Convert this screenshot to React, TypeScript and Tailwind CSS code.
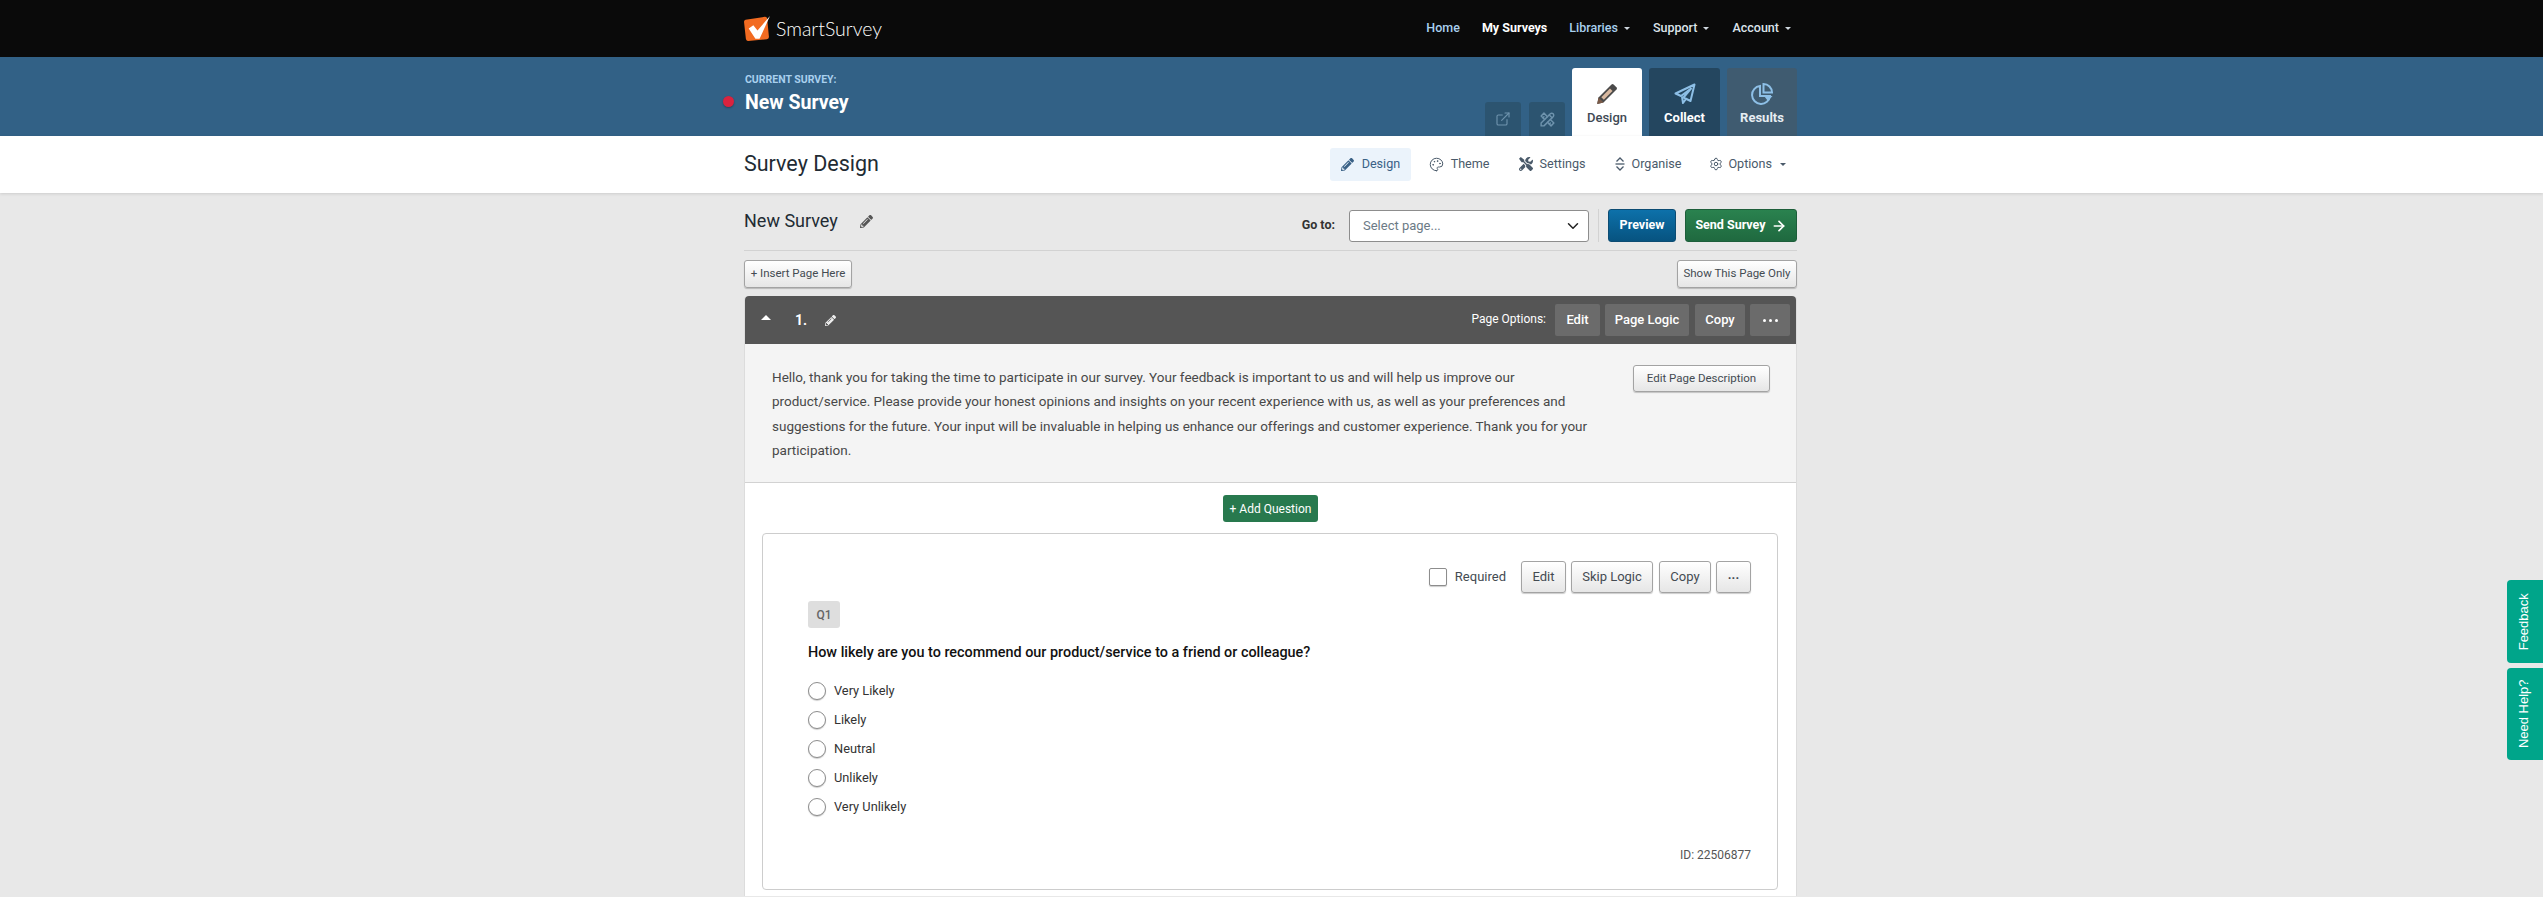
import React from "react";
import { ExternalLink, Palette, Settings, ChevronDown, ArrowRight } from "lucide-react";
import { FaPencilAlt, FaTools } from "react-icons/fa";
import { TbTools } from "react-icons/tb";

const font = { fontFamily: "Roboto, 'Liberation Sans', sans-serif" };

function Logo() {
  return (
    <svg width="27" height="26" viewBox="0 0 26 25">
      <path d="M1.5 3.5 L20 0.8 Q22 0.6 22.3 2.5 L24 20 Q24.2 22 22 22.3 L4 24 Q2 24.2 1.8 22 L0 5.5 Q0 3.8 1.5 3.5Z" fill="#f26b21" />
      <path d="M4.5 12 L9 9 L13 14 L25 0 L15 22 L11 22 Z" fill="#fff" />
    </svg>
  );
}

function PencilBig() {
  return (
    <svg width="22" height="22" viewBox="0 0 22 22">
      <path d="M15.5 1.5 Q16.5 0.6 17.6 1.4 L20.6 4.4 Q21.4 5.5 20.5 6.5 L7.5 19.5 L1.2 21 L2.5 14.5 Z" fill="#4a4a4a" />
      <path d="M5.3 14.2 L14 5.5 L16.5 8 L7.8 16.7 Z" fill="#d9b9a0" />
      <path d="M2.5 14.5 L1.2 21 L7.5 19.5 Z" fill="#7a5a48" />
    </svg>
  );
}

function Plane() {
  return (
    <svg width="22" height="22" viewBox="0 0 22 22" fill="none" stroke="#8dbfe6" strokeWidth="2" strokeLinejoin="round">
      <path d="M20.5 1.5 L1.5 10.5 L7 13 L17 5.5 L9.5 14.5 L16.5 18 Z" />
      <path d="M8 13.5 L9 20 L12 16" />
    </svg>
  );
}

function Pie() {
  return (
    <svg width="22" height="22" viewBox="0 0 22 22" fill="none" stroke="#8dbfe6" strokeWidth="2">
      <path d="M9 3 A9 9 0 1 0 19 13 H9 Z" />
      <path d="M12.5 1 A8.5 8.5 0 0 1 21 9.5 H12.5 Z" />
      <path d="M13 13 H21.5 L17 18 Z" fill="#8dbfe6" stroke="none" />
    </svg>
  );
}

function Caret({ className }: { className: string }) {
  return <span className={"inline-block w-0 h-0 border-x-[3px] border-x-transparent border-t-[3px] " + className} />;
}

function OrganiseIcon() {
  return (
    <svg width="10" height="14" viewBox="0 0 10 14" fill="none" stroke="#4a5a6a" strokeWidth="1.3">
      <path d="M1.5 4.5 L5 1 L8.5 4.5" />
      <path d="M0.5 7 H9.5" />
      <path d="M1.5 9.5 L5 13 L8.5 9.5" />
    </svg>
  );
}

function GreyButton({ children, className }: { children: React.ReactNode; className: string }) {
  return (
    <button className={"flex items-center justify-center rounded-[3px] border border-[#a3a3a3] bg-gradient-to-b from-white to-[#e6e6e6] text-[#444b52] shadow-[0_1px_1px_rgba(0,0,0,0.2)] " + className}>
      {children}
    </button>
  );
}

function DarkButton({ children, className }: { children: React.ReactNode; className: string }) {
  return <button className={"flex h-[32px] items-center justify-center rounded-[2px] bg-[#6b6b6b] text-[13px] font-medium text-white " + className}>{children}</button>;
}

function Option({ label }: { label: string }) {
  return (
    <div className="flex h-[29px] items-center gap-[8px]">
      <span className="h-[18px] w-[18px] rounded-full border border-[#8d8d8d] bg-white shadow-[0_1px_1px_rgba(0,0,0,0.2)]" />
      <span className="text-[12.8px] text-[#333]">{label}</span>
    </div>
  );
}

export default function App() {
  return (
    <div style={font} className="relative h-[897px] w-full overflow-hidden bg-[#e8e8e8]">
      {/* Top bar */}
      <header className="h-[57px] bg-[#0a0a0a]">
        <div className="ml-[744px] flex h-full w-[1053px] items-center">
          <Logo />
          <span className="ml-[5px] text-[19.5px] font-light leading-none text-white" style={{ fontFamily: "Lato, sans-serif" }}>SmartSurvey</span>
          <nav className="ml-auto mr-[6px] flex items-center text-[12.5px] font-medium">
            <span className="text-[#a9d0ee]">Home</span>
            <span className="ml-[22px] font-bold text-white">My Surveys</span>
            <span className="ml-[22px] text-[#a9d0ee]">Libraries</span>
            <Caret className="ml-[6px] border-t-[#cfd8df]" />
            <span className="ml-[23px] text-[#dbe3ea]">Support</span>
            <Caret className="ml-[6px] border-t-[#cfd8df]" />
            <span className="ml-[23px] text-[#dbe3ea]">Account</span>
            <Caret className="ml-[6px] border-t-[#cfd8df]" />
          </nav>
        </div>
      </header>

      {/* Survey bar */}
      <div className="h-[79px] bg-[#326186]">
        <div className="ml-[744px] flex h-full w-[1053px] justify-between">
          <div className="relative pt-[16px] pl-[1px]">
            <span className="absolute left-[-21px] top-[39px] h-[11px] w-[11px] rounded-full bg-[#d9233f] shadow-[0_1px_2px_rgba(0,0,0,0.3)]" />
            <div className="text-[10.5px] font-bold leading-[14px] text-[#a9d0ee]">CURRENT SURVEY:</div>
            <div className="mt-[4px] text-[19.5px] font-bold leading-[24px] text-white">New Survey</div>
          </div>
          <div className="flex items-end">
            <div className="flex h-[34px] w-[36px] items-center justify-center rounded-t-[3px] bg-[#2c5470]">
              <ExternalLink size={16} color="#6e93ad" strokeWidth={1.7} />
            </div>
            <div className="ml-[8px] flex h-[34px] w-[36px] items-center justify-center rounded-t-[3px] bg-[#2c5470]">
              <TbTools size={17} color="#6e93ad" />
            </div>
            <div className="ml-[7px] flex h-[68px] w-[70px] flex-col items-center rounded-t-[3px] bg-white pt-[15px]">
              <PencilBig />
              <span className="mt-[4px] text-[13px] font-medium leading-[18px] text-[#3f4a55]">Design</span>
            </div>
            <div className="ml-[7px] flex h-[68px] w-[71px] flex-col items-center rounded-t-[3px] bg-[#24465f] pt-[15px]">
              <Plane />
              <span className="mt-[4px] text-[13px] font-bold leading-[18px] text-white">Collect</span>
            </div>
            <div className="ml-[7px] flex h-[68px] w-[70px] flex-col items-center rounded-t-[3px] bg-[#3f5b70] pt-[15px]">
              <Pie />
              <span className="mt-[4px] text-[13px] font-bold leading-[18px] text-[#e6edf2]">Results</span>
            </div>
          </div>
        </div>
      </div>

      {/* Sub nav */}
      <div className="relative h-[57px] bg-white shadow-[0_1px_3px_rgba(0,0,0,0.12)]">
        <div className="ml-[744px] flex h-full w-[1053px] items-center">
          <h1 className="text-[21.5px] font-normal text-[#222b33]">Survey Design</h1>
          <nav className="ml-auto mr-[11px] flex items-center text-[12.6px] text-[#4a5a6a]">
            <div className="flex h-[33px] w-[81px] items-center gap-[8px] rounded-[3px] bg-[#ebf3fb] pl-[11px]">
              <FaPencilAlt size={13} color="#3a6186" />
              <span className="text-[#3a6186]">Design</span>
            </div>
            <div className="ml-[18px] flex items-center gap-[7px]">
              <Palette size={15} strokeWidth={1.6} />
              <span>Theme</span>
            </div>
            <div className="ml-[29px] flex items-center gap-[7px]">
              <FaTools size={14} />
              <span>Settings</span>
            </div>
            <div className="ml-[29px] flex items-center gap-[7px]">
              <OrganiseIcon />
              <span>Organise</span>
            </div>
            <div className="ml-[28px] flex items-center gap-[5px]">
              <Settings size={14} strokeWidth={1.7} />
              <span>Options</span>
            </div>
            <Caret className="ml-[8px] border-t-[#4a5a6a]" />
          </nav>
        </div>
      </div>

      {/* Main */}
      <main className="ml-[744px] w-[1053px]">
        <div className="flex h-[58px] items-start border-b border-[#d2d2d2] pt-[16px]">
          <span className="text-[18px] leading-[24px] text-[#222b33]">New Survey</span>
          <FaPencilAlt size={13} color="#555" className="ml-[22px] mt-[6px]" />
          <span className="ml-auto text-[12.5px] font-bold leading-[32px] text-[#333]">Go to:</span>
          <div className="ml-[14px] mt-[1px] flex h-[32px] w-[240px] items-center justify-between rounded-[3px] border border-[#8d8d8d] bg-white pl-[13px] pr-[6px] text-[13px] text-[#6c7a86]">
            <span>Select page...</span>
            <ChevronDown size={18} color="#222" strokeWidth={2} />
          </div>
          <span className="ml-[9px] h-[33px] w-px bg-[#d2d2d2]" />
          <button className="ml-[9px] h-[33px] w-[68px] rounded-[3px] border border-[#0c4c73] bg-gradient-to-b from-[#0d71aa] to-[#075380] text-[12.5px] font-bold text-white">Preview</button>
          <button className="ml-[9px] flex h-[33px] w-[112px] items-center justify-center gap-[5px] rounded-[3px] border border-[#1d5e3a] bg-gradient-to-b from-[#2a824f] to-[#1f693f] text-[12.5px] font-bold text-white">
            Send Survey <ArrowRight size={16} strokeWidth={2.5} />
          </button>
        </div>

        <div className="mt-[9px] flex justify-between">
          <GreyButton className="h-[28px] w-[108px] text-[11.5px]">+ Insert Page Here</GreyButton>
          <GreyButton className="h-[28px] w-[120px] text-[11.5px]">Show This Page Only</GreyButton>
        </div>

        {/* Page panel */}
        <section className="mt-[8px] h-[600px] rounded-t-[4px] border-x border-[#dcdcdc] bg-white">
          <div className="flex h-[48px] items-center rounded-t-[4px] bg-[#555555] pl-[16px] pr-[6px]">
            <span className="-mt-[6px] h-0 w-0 border-x-[5px] border-x-transparent border-b-[5px] border-b-white" />
            <span className="ml-[24px] text-[14px] font-bold text-white">1.</span>
            <FaPencilAlt size={11} color="#eee" className="ml-[18px]" />
            <span className="ml-auto mr-[9px] -mt-[3px] text-[12px] text-white">Page Options:</span>
            <DarkButton className="w-[45px]">Edit</DarkButton>
            <DarkButton className="ml-[5px] w-[84px]">Page Logic</DarkButton>
            <DarkButton className="ml-[6px] w-[50px]">Copy</DarkButton>
            <DarkButton className="ml-[5px] w-[40px]">
              <span className="flex gap-[3px]">
                <span className="h-[3px] w-[3px] rounded-full bg-white" />
                <span className="h-[3px] w-[3px] rounded-full bg-white" />
                <span className="h-[3px] w-[3px] rounded-full bg-white" />
              </span>
            </DarkButton>
          </div>

          <div className="flex h-[139px] items-start border-b border-[#d2d2d2] bg-[#f4f4f4] pl-[27px] pr-[26px] pt-[21px]">
            <p className="w-[820px] text-[13.5px] leading-[24.3px] text-[#484848]">
              Hello, thank you for taking the time to participate in our survey. Your feedback is important to us and will help us improve our product/service. Please provide your honest opinions and insights on your recent experience with us, as well as your preferences and suggestions for the future. Your input will be invaluable in helping us enhance our offerings and customer experience. Thank you for your participation.
            </p>
            <GreyButton className="ml-auto h-[27px] w-[137px] text-[11.5px]">Edit Page Description</GreyButton>
          </div>

          <div className="mt-[12px] flex justify-center">
            <button className="h-[27px] w-[95px] rounded-[3px] bg-[#28794e] text-[12px] text-white">+ Add Question</button>
          </div>

          {/* Question card */}
          <div className="ml-[17px] mt-[11px] h-[357px] w-[1016px] rounded-[4px] border border-[#cdcdcd] bg-white pl-[45px] pr-[26px] pt-[27px]">
            <div className="flex h-[32px] items-center justify-end">
              <span className="h-[18px] w-[18px] rounded-[2px] border border-[#8d8d8d] bg-white shadow-[0_1px_1px_rgba(0,0,0,0.2)]" />
              <span className="ml-[8px] text-[13px] text-[#444b52]">Required</span>
              <GreyButton className="ml-[15px] h-[32px] w-[45px] text-[13px]">Edit</GreyButton>
              <GreyButton className="ml-[5px] h-[32px] w-[82px] text-[13px]">Skip Logic</GreyButton>
              <GreyButton className="ml-[6px] h-[32px] w-[52px] text-[13px]">Copy</GreyButton>
              <GreyButton className="ml-[5px] h-[32px] w-[35px] pb-[4px] text-[13px] font-bold">...</GreyButton>
            </div>
            <div className="mt-[8px] flex h-[27px] w-[32px] items-center justify-center rounded-[3px] bg-[#dedede] text-[12px] font-medium text-[#666]">Q1</div>
            <div className="mt-[15px] text-[14.4px] font-medium leading-[20px] text-[#111]">How likely are you to recommend our product/service to a friend or colleague?</div>
            <div className="mt-[13px]">
              {["Very Likely", "Likely", "Neutral", "Unlikely", "Very Unlikely"].map((o) => (
                <Option key={o} label={o} />
              ))}
            </div>
            <div className="mt-[25px] text-right text-[12px] text-[#555]">ID: 22506877</div>
          </div>
        </section>
      </main>

      {/* Side tabs */}
      <div className="absolute right-0 top-[580px] flex flex-col gap-[5px]" style={{ fontFamily: "'Liberation Sans', sans-serif" }}>
        <div className="flex h-[83px] w-[36px] items-center justify-center rounded-l-[4px] bg-[#00a58a] pr-[3px] text-[13px] text-white">
          <span className="-rotate-90 whitespace-nowrap">Feedback</span>
        </div>
        <div className="flex h-[92px] w-[36px] items-center justify-center rounded-l-[4px] bg-[#00a58a] pr-[3px] text-[13px] text-white">
          <span className="-rotate-90 whitespace-nowrap">Need Help?</span>
        </div>
      </div>
    </div>
  );
}
